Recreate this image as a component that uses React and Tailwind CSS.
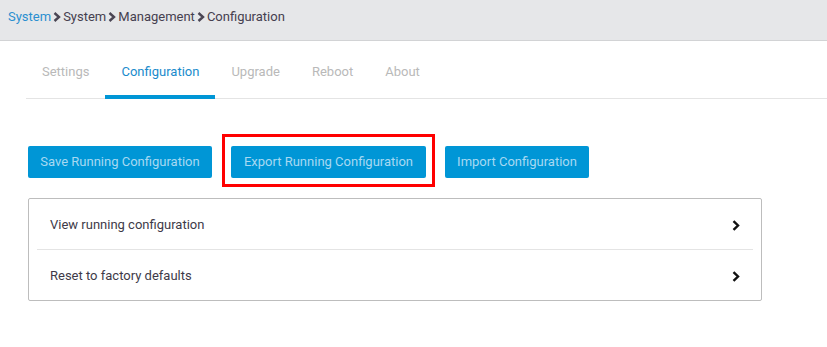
import React from "react";

const font = { fontFamily: "Roboto, 'Liberation Sans', sans-serif" };

function Crumb({ className = "" }) {
  return (
    <svg className={`w-[8px] h-[10px] mx-[2px] ${className}`} viewBox="0 0 8 10">
      <path d="M1.5 1 L6 5 L1.5 9" fill="none" stroke="#4a4553" strokeWidth="2.4" />
    </svg>
  );
}

function Chevron() {
  return (
    <svg className="w-[8px] h-[11px]" viewBox="0 0 8 11">
      <path d="M1.5 1.2 L6 5.5 L1.5 9.8" fill="none" stroke="#111" strokeWidth="2.4" />
    </svg>
  );
}

export default function App() {
  const tabs = [
    { id: "settings", name: "Settings" },
    { id: "configuration", name: "Configuration" },
    { id: "upgrade", name: "Upgrade" },
    { id: "reboot", name: "Reboot" },
    { id: "about", name: "About" },
  ];
  const active = "configuration";

  return (
    <div className="w-[827px] h-[347px] bg-white overflow-hidden text-[13px]" style={font}>
      {/* Breadcrumb bar */}
      <header className="h-[41px] bg-[#e6e7e9] border-b border-[#d2d3d5] flex items-center pl-[8px] pb-[7px]">
        <span className="text-[#2a8fd0]">System</span>
        <Crumb />
        <span className="text-[#45404f]">System</span>
        <Crumb />
        <span className="text-[#45404f]">Management</span>
        <Crumb />
        <span className="text-[#45404f]">Configuration</span>
      </header>

      {/* Tabs */}
      <nav className="ml-[26px] flex border-b border-[#e4e4e4]">
        {tabs.map((tab) => {
          const isActive = tab.id === active;
          return (
            <div
              key={tab.id}
              className={`px-[16px] pt-[21px] pb-[13px] leading-[20px] border-b-4 -mb-px ${
                isActive ? "border-[#0096d6] text-[#1a8bcc]" : "border-transparent text-[#b9b9b9]"
              } ${tab.id === "upgrade" || tab.id === "reboot" || tab.id === "about" ? "px-[15px]" : ""}`}
            >
              {tab.name}
            </div>
          );
        })}
      </nav>

      {/* Action buttons */}
      <div className="ml-[28px] mt-[47px] flex gap-[19px]">
        <button className="w-[184px] h-[32px] rounded-[2px] bg-[#0096d6] text-[#a7d9f2]">
          Save Running Configuration
        </button>
        <div className="relative">
          <button className="w-[195px] h-[32px] rounded-[2px] bg-[#0096d6] text-[#a7d9f2]">
            Export Running Configuration
          </button>
          {/* highlight box */}
          <div className="absolute left-[-9px] right-[-9px] top-[-12px] bottom-[-9px] border-[3px] border-[#ff0000]" />
        </div>
        <button className="w-[144px] h-[32px] rounded-[2px] bg-[#0096d6] text-[#a7d9f2]">
          Import Configuration
        </button>
      </div>

      {/* Config list */}
      <div className="ml-[28px] mt-[20px] w-[734px] border border-[#bdbdbd] rounded-[2px]">
        <div className="mx-[8px] h-[51px] pt-[2px] pl-[13px] pr-[13px] flex items-center justify-between border-b border-[#e4e4e4] text-[#3e3a48]">
          <span>View running configuration</span>
          <Chevron />
        </div>
        <div className="mx-[8px] h-[50px] pt-[2px] pl-[13px] pr-[13px] flex items-center justify-between text-[#3e3a48]">
          <span>Reset to factory defaults</span>
          <Chevron />
        </div>
      </div>
    </div>
  );
}
